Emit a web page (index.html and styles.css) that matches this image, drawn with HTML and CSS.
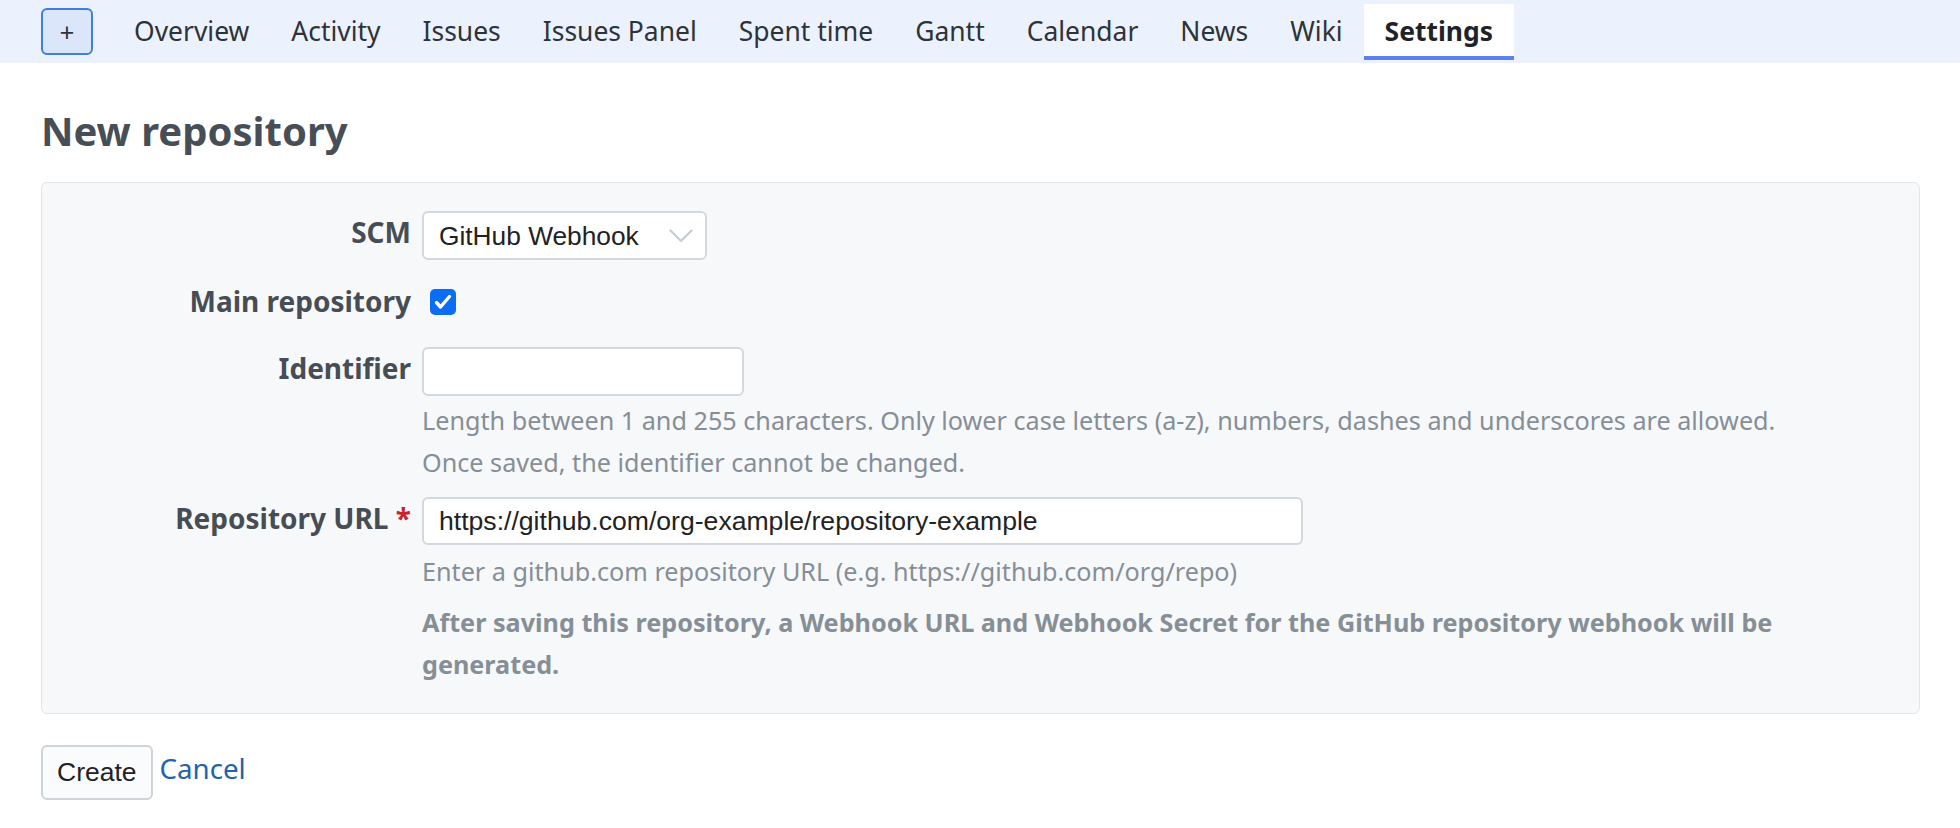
FILE: index.html
```html
<!DOCTYPE html>
<html lang="en">
<head>
    <meta charset="UTF-8">
    <meta name="viewport" content="width=device-width, initial-scale=1.0">
    <title>New repository - Settings</title>
    <link rel="stylesheet" href="styles.css">
</head>
<body>
    <nav class="main-menu">
        <a href="#" class="new-object">+</a>
        <ul class="tabs">
            <li><a href="#">Overview</a></li>
            <li><a href="#">Activity</a></li>
            <li><a href="#">Issues</a></li>
            <li><a href="#">Issues Panel</a></li>
            <li><a href="#">Spent time</a></li>
            <li><a href="#">Gantt</a></li>
            <li><a href="#">Calendar</a></li>
            <li><a href="#">News</a></li>
            <li><a href="#">Wiki</a></li>
            <li><a href="#" class="selected">Settings</a></li>
        </ul>
    </nav>

    <div class="content">
        <h2>New repository</h2>

        <form id="repositoryForm">
            <div class="box">
                <div class="row">
                    <label for="scm">SCM</label>
                    <div class="field">
                        <span class="select-wrap">
                            <select id="scm" name="scm">
                                <option>GitHub Webhook</option>
                            </select>
                            <svg class="chevron" width="24" height="14" viewBox="0 0 24 14">
                                <polyline points="1.5,1.5 12,12 22.5,1.5" fill="none" stroke="#c9ced5" stroke-width="2.4" stroke-linecap="round" stroke-linejoin="round"/>
                            </svg>
                        </span>
                    </div>
                </div>

                <div class="row row-check">
                    <label for="isDefault">Main repository</label>
                    <div class="field field-check">
                        <span class="check-wrap">
                            <input type="checkbox" id="isDefault" name="isDefault" checked>
                            <svg class="checkmark" width="26" height="26" viewBox="0 0 26 26">
                                <polyline points="6.5,13.5 10.5,18 19.5,7.5" fill="none" stroke="#fff" stroke-width="3.4" stroke-linecap="round" stroke-linejoin="round"/>
                            </svg>
                        </span>
                    </div>
                </div>

                <div class="row row-identifier">
                    <label for="identifier">Identifier</label>
                    <div class="field">
                        <input type="text" id="identifier" name="identifier" class="input-id">
                        <div class="info first">Length between 1 and 255 characters. Only lower case letters (a-z), numbers, dashes and underscores are allowed.</div>
                        <div class="info">Once saved, the identifier cannot be changed.</div>
                    </div>
                </div>

                <div class="row row-url">
                    <label for="url">Repository URL <span class="required">*</span></label>
                    <div class="field">
                        <input type="text" id="url" name="url" class="input-url" value="https://github.com/org-example/repository-example">
                        <div class="info first">Enter a github.com repository URL (e.g. https://github.com/org/repo)</div>
                        <div class="info note">After saving this repository, a Webhook URL and Webhook Secret for the GitHub repository webhook will be generated.</div>
                    </div>
                </div>
            </div>

            <div class="actions">
                <button type="submit">Create</button>
                <a href="#">Cancel</a>
            </div>
        </form>
    </div>
</body>
</html>
```

FILE: styles.css
```css
* {
    margin: 0;
    padding: 0;
    box-sizing: border-box;
}

body {
    font-family: 'Noto Sans', sans-serif;
    font-size: 26.45px;
    color: #333;
    background: #fff;
}

/* top menu */
.main-menu {
    display: flex;
    align-items: flex-start;
    height: 63px;
    padding: 4px 0 3px 41px;
    background: #ebf1fd;
}

.new-object {
    display: flex;
    align-items: center;
    justify-content: center;
    width: 52px;
    height: 47px;
    margin-top: 4px;
    margin-right: 20px;
    background: #dce6fb;
    border: 2px solid #3d7fe0;
    border-radius: 6px;
    color: #2e3338;
    font-size: 26px;
    text-decoration: none;
}

.tabs {
    display: flex;
    list-style: none;
}

.tabs a {
    display: block;
    padding: 3px 21px 0;
    line-height: 49px;
    border-bottom: 4px solid transparent;
    color: #2e3338;
    text-decoration: none;
}

.tabs a.selected {
    background: #fff;
    border-bottom-color: #5b80f0;
    color: #1f2327;
    font-weight: 700;
}

/* page content */
.content {
    padding: 0 40px 0 41px;
}

h2 {
    margin: 44px 0 27px;
    font-size: 40px;
    line-height: 48px;
    color: #484e55;
}

.box {
    background: #f7f8fa;
    border: 1px solid #e3e5e9;
    border-radius: 6px;
    padding: 28px 20px;
}

.row {
    display: flex;
    align-items: flex-start;
}

.row-check {
    margin-top: 20px;
}

.row-identifier {
    margin-top: 18px;
}

.row-url {
    margin-top: 14px;
}

.row label {
    flex-shrink: 0;
    width: 349px;
    margin-right: 11px;
    padding-bottom: 6px;
    text-align: right;
    font-size: 28px;
    font-weight: 700;
    line-height: 43px;
    color: #474d54;
}

.required {
    color: #c8232c;
}

.field {
    flex: 1;
    min-width: 0;
}

.field-check {
    display: flex;
    align-items: center;
    height: 43px;
}

select, input[type="text"], button {
    font-family: 'Liberation Sans', Arial, sans-serif;
    font-size: 26.6px;
    color: #222;
}

.select-wrap {
    position: relative;
    display: inline-block;
}

select {
    width: 285px;
    height: 49px;
    padding: 0 15px;
    background: #fff;
    border: 2px solid #d3d8de;
    border-radius: 6px;
    font-size: 26.3px;
    appearance: none;
    -webkit-appearance: none;
}

.chevron {
    position: absolute;
    right: 14px;
    top: 18px;
    pointer-events: none;
}

.check-wrap {
    position: relative;
    display: inline-block;
    width: 26px;
    height: 26px;
    margin-left: 8px;
}

.check-wrap input {
    display: block;
    width: 26px;
    height: 26px;
    background: #0b6cf6;
    border-radius: 5px;
    appearance: none;
    -webkit-appearance: none;
}

.checkmark {
    position: absolute;
    left: 0;
    top: 0;
    pointer-events: none;
}

input[type="text"] {
    display: block;
    height: 49px;
    padding: 0 15px;
    background: #fff;
    border: 2px solid #d3d8de;
    border-radius: 6px;
}

.input-id {
    width: 322px;
}

.input-url {
    width: 881px;
    height: 48px !important;
}

.info {
    font-size: 25.2px;
    line-height: 42px;
    color: #868e96;
}

.info.first {
    margin-top: 3px;
}

.row-url .info.first {
    margin-top: 5px;
}

.info.note {
    margin-top: 9px;
    font-weight: 700;
}

/* buttons */
.actions {
    display: flex;
    align-items: center;
    gap: 7px;
    margin-top: 31px;
}

button {
    height: 55px;
    padding: 0 14px;
    background: #fafbfc;
    border: 2px solid #cfd4db;
    border-radius: 6px;
    font-size: 26.5px;
    cursor: pointer;
}

.actions a {
    padding-bottom: 10px;
    font-size: 27.7px;
    color: #1d63ad;
    text-decoration: none;
}
```
